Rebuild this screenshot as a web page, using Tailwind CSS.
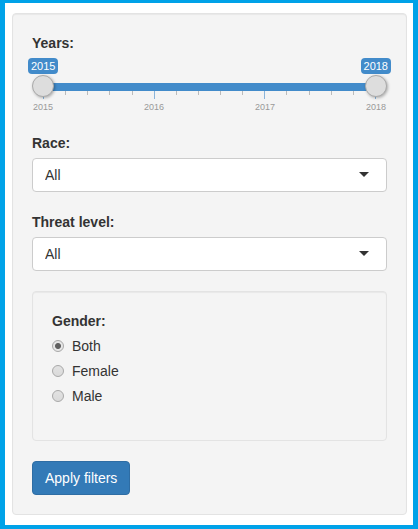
<!DOCTYPE html>
<html lang="en">
<head>
<meta charset="utf-8">
<meta name="viewport" content="width=device-width, initial-scale=1">
<title>Filters</title>
<script src="https://cdn.jsdelivr.net/npm/@tailwindcss/browser@4"></script>
</head>
<body class="flex min-h-screen flex-col bg-[#00a2e8] px-[5px] pt-[3px] pb-1 font-['Liberation_Sans',Arial,sans-serif] text-sm leading-5 text-[#333]">
<main class="flex-1 bg-white py-[10px] pr-[6px] pl-[7px]">
  <form class="rounded border border-[#e3e3e3] bg-[#f4f4f4] p-[19px] shadow-[inset_0_1px_1px_rgba(0,0,0,0.05)]">
    <fieldset class="mb-5">
      <legend class="mb-[5px] font-bold">Years:</legend>
      <div class="-mx-1 flex justify-between text-[11px] leading-4 text-white">
        <output for="year-from" class="rounded bg-[#428bca] px-[3px]">2015</output>
        <output for="year-to" class="rounded bg-[#428bca] px-[3px]">2018</output>
      </div>
      <div class="relative mt-px h-[26px]">
        <div class="h-2"></div>
        <div class="mx-[10px] h-2 bg-[#428bca]"></div>
        <div class="mx-[11px] flex items-start justify-between" aria-hidden="true">
          <i class="h-2 w-px bg-[#428bca]/60"></i><i class="h-1 w-px bg-[#bbb]"></i><i class="h-1 w-px bg-[#bbb]"></i><i class="h-1 w-px bg-[#bbb]"></i><i class="h-1 w-px bg-[#bbb]"></i>
          <i class="h-2 w-px bg-[#428bca]/60"></i><i class="h-1 w-px bg-[#bbb]"></i><i class="h-1 w-px bg-[#bbb]"></i><i class="h-1 w-px bg-[#bbb]"></i><i class="h-1 w-px bg-[#bbb]"></i>
          <i class="h-2 w-px bg-[#428bca]/60"></i><i class="h-1 w-px bg-[#bbb]"></i><i class="h-1 w-px bg-[#bbb]"></i><i class="h-1 w-px bg-[#bbb]"></i><i class="h-1 w-px bg-[#bbb]"></i>
          <i class="h-2 w-px bg-[#428bca]/60"></i>
        </div>
        <input id="year-from" type="range" min="2015" max="2018" value="2015" aria-label="From year" class="pointer-events-none absolute inset-x-0 top-0 h-[22px] w-full appearance-none bg-transparent [&::-webkit-slider-thumb]:pointer-events-auto [&::-webkit-slider-thumb]:size-[22px] [&::-webkit-slider-thumb]:appearance-none [&::-webkit-slider-thumb]:rounded-full [&::-webkit-slider-thumb]:border [&::-webkit-slider-thumb]:border-[#aaa] [&::-webkit-slider-thumb]:bg-[#ddd] [&::-webkit-slider-thumb]:shadow-[1px_1px_3px_rgba(0,0,0,0.3)]">
        <input id="year-to" type="range" min="2015" max="2018" value="2018" aria-label="To year" class="pointer-events-none absolute inset-x-0 top-0 h-[22px] w-full appearance-none bg-transparent [&::-webkit-slider-thumb]:pointer-events-auto [&::-webkit-slider-thumb]:size-[22px] [&::-webkit-slider-thumb]:appearance-none [&::-webkit-slider-thumb]:rounded-full [&::-webkit-slider-thumb]:border [&::-webkit-slider-thumb]:border-[#aaa] [&::-webkit-slider-thumb]:bg-[#ddd] [&::-webkit-slider-thumb]:shadow-[1px_1px_3px_rgba(0,0,0,0.3)]">
      </div>
      <div class="flex justify-between text-center text-[9px] leading-3 text-[#999]">
        <span class="w-[22px]">2015</span><span class="w-[22px]">2016</span><span class="w-[22px]">2017</span><span class="w-[22px]">2018</span>
      </div>
    </fieldset>

    <div class="mb-5">
      <label for="race" class="mb-[5px] block font-bold">Race:</label>
      <div class="relative">
        <select id="race" class="block h-[34px] w-full appearance-none rounded border border-[#ccc] bg-white px-3"><option>All</option></select>
        <svg class="pointer-events-none absolute top-[14px] right-[18px] h-[5px] w-[10px]" viewBox="0 0 10 5" fill="#333" aria-hidden="true"><path d="M0 0h10L5 5z"/></svg>
      </div>
    </div>

    <div class="mb-5">
      <label for="threat" class="mb-[5px] block font-bold">Threat level:</label>
      <div class="relative">
        <select id="threat" class="block h-[34px] w-full appearance-none rounded border border-[#ccc] bg-white px-3"><option>All</option></select>
        <svg class="pointer-events-none absolute top-[14px] right-[18px] h-[5px] w-[10px]" viewBox="0 0 10 5" fill="#333" aria-hidden="true"><path d="M0 0h10L5 5z"/></svg>
      </div>
    </div>

    <div class="mb-5 rounded border border-[#e3e3e3] bg-[#f4f4f4] p-[19px] shadow-[inset_0_1px_1px_rgba(0,0,0,0.05)]">
      <fieldset class="mb-[15px]">
        <legend class="mb-[5px] font-bold">Gender:</legend>
        <div class="flex flex-col items-start gap-[5px]">
          <label class="flex items-center gap-2"><input type="radio" name="gender" checked class="size-3 appearance-none rounded-full border border-[#a8a8a8] bg-linear-to-b from-[#e2e2e2] to-[#dadada] checked:bg-[radial-gradient(circle,#606060_2.5px,#e6e6e6_3.5px)]">Both</label>
          <label class="flex items-center gap-2"><input type="radio" name="gender" class="size-3 appearance-none rounded-full border border-[#a8a8a8] bg-linear-to-b from-[#e2e2e2] to-[#dadada] checked:bg-[radial-gradient(circle,#606060_2.5px,#e6e6e6_3.5px)]">Female</label>
          <label class="flex items-center gap-2"><input type="radio" name="gender" class="size-3 appearance-none rounded-full border border-[#a8a8a8] bg-linear-to-b from-[#e2e2e2] to-[#dadada] checked:bg-[radial-gradient(circle,#606060_2.5px,#e6e6e6_3.5px)]">Male</label>
        </div>
      </fieldset>
    </div>

    <button type="submit" class="block rounded border border-[#2e6da4] bg-[#337ab7] px-3 py-[6px] text-white">Apply filters</button>
  </form>
</main>
</body>
</html>
